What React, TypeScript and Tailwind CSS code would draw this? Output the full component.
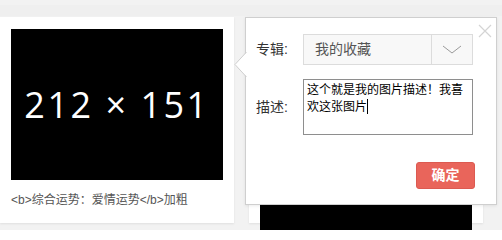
import React from 'react';

const cjk = { fontFamily: '"Liberation Sans", "Noto Sans CJK SC", sans-serif' };

function ImageCard({ caption, imgH }: { caption?: string; imgH: number }) {
  return (
    <div className="w-[234px] h-[206px] shrink-0 bg-white px-[11px] pt-[12px] shadow-[0_1px_2px_rgba(0,0,0,0.08)]">
      <div
        className="w-[212px] bg-black flex items-center justify-center text-white text-[36px] tracking-[2.5px]"
        style={{ height: imgH, fontFamily: '"Open Sans", sans-serif' }}
      >
        {caption ? '212 × 151' : null}
      </div>
      {caption && (
        <p className="mt-[12px] text-[12px] leading-[16px] text-[#555]" style={cjk}>
          {caption}
        </p>
      )}
    </div>
  );
}

function CollectPopup() {
  return (
    <div
      className="absolute left-[245px] top-[17px] w-[252px] h-[188px] bg-white border border-[#cfcfcf] shadow-[0_1px_3px_rgba(0,0,0,0.08)] pl-[10px] pt-[16px]"
      style={cjk}
    >
      {/* arrow */}
      <svg className="absolute left-[-12px] top-[34px]" width="13" height="25" viewBox="0 0 13 25">
        <polygon points="13,0 1,12.5 13,25" fill="#fff" />
        <polyline points="12.5,0 1,12.5 12.5,25" fill="none" stroke="#cfcfcf" strokeWidth="1" />
      </svg>

      {/* close */}
      <svg className="absolute right-[4px] top-[6px]" width="14" height="14" viewBox="0 0 14 14">
        <path d="M1 1 L13 13 M13 1 L1 13" stroke="#d4d4d4" strokeWidth="1.2" />
      </svg>

      <div className="flex items-center">
        <span className="w-[47px] text-[14px] text-[#333]">专辑:</span>
        <div className="w-[170px] h-[31px] flex bg-[#f8f8f8] border border-[#dcdcdc]">
          <span className="flex-1 pl-[11px] text-[14px] leading-[29px] text-[#555]">我的收藏</span>
          <div className="w-[41px] border-l border-[#dcdcdc] flex items-center justify-center">
            <svg width="20" height="9" viewBox="0 0 20 9">
              <path d="M1 1 L10 8 L19 1" fill="none" stroke="#9a9a9a" strokeWidth="1" />
            </svg>
          </div>
        </div>
      </div>

      <div className="flex items-center mt-[14px]">
        <span className="w-[47px] text-[14px] text-[#333]">描述:</span>
        <div className="w-[170px] h-[56px] border border-[#8e8e8e] pl-[3px] pr-[2px] pt-[2px] text-[12px] leading-[17px] text-black">
          这个就是我的图片描述！我喜欢这张图片
          <span className="inline-block w-px h-[15px] bg-black align-[-3px]" />
        </div>
      </div>

      <div className="flex justify-end mt-[27px] pr-[21px]">
        <button className="w-[59px] h-[27px] rounded-[3px] bg-[#e9655b] border border-[#dc5a51] text-white text-[14px] font-bold">
          确定
        </button>
      </div>
    </div>
  );
}

export default function App() {
  return (
    <div className="relative w-[502px] h-[230px] overflow-hidden bg-[#f2f2f2]">
      <div className="h-[17px] pt-[5px]">
        <div className="h-[11px] bg-[#efefef]" />
      </div>
      <div className="flex">
        <ImageCard caption="<b>综合运势：爱情运势</b>加粗" imgH={151} />
        <div className="ml-[15px]">
          <ImageCard imgH={300} />
        </div>
      </div>
      <CollectPopup />
    </div>
  );
}
